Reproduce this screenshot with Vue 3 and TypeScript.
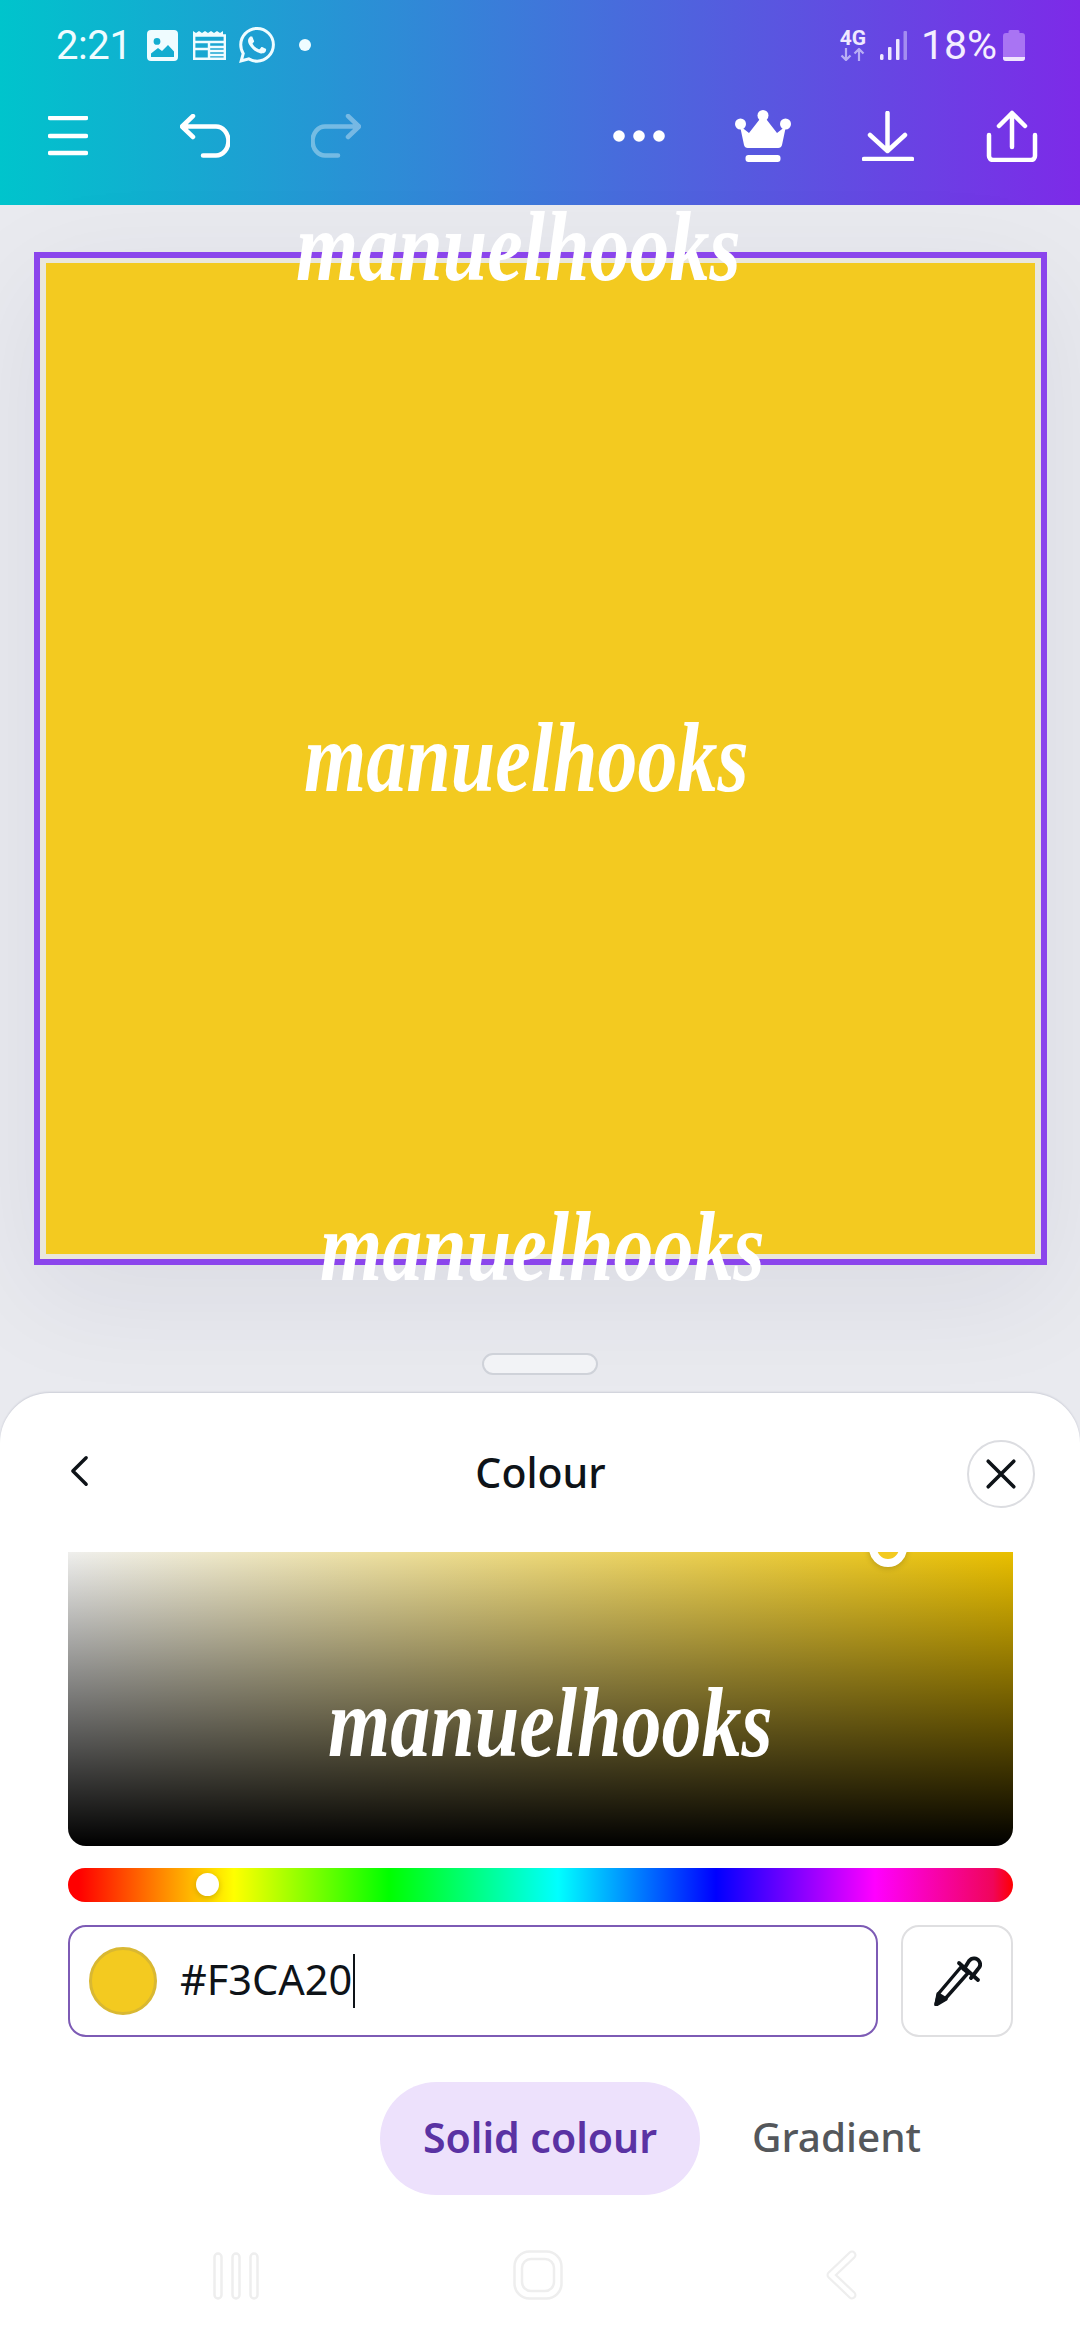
<script setup lang="ts">
const hex = '#F3CA20'
const mark = 'manuelhooks'
const hueStops = 'linear-gradient(90deg, #f00 0, #f00 11px, #ff0 166px, #0f0 321px, #0ff 490px, #00f 648px, #f0f 807px, #f0055a 925px, #f00 945px)'
</script>

<template>
  <div class="screen">
    <header class="top">
      <div class="status">
        <span class="time">2:21</span>
        <svg class="ic-img" viewBox="0 0 31 31">
          <path fill="#effcff" fill-rule="evenodd" d="M4 0h23a4 4 0 0 1 4 4v23a4 4 0 0 1-4 4H4a4 4 0 0 1-4-4V4a4 4 0 0 1 4-4zM10 8a3.4 3.4 0 1 0 0 6.8A3.4 3.4 0 0 0 10 8zM4 23.5V27h23v-5.5l-6-6.5-6 6-4-3z" />
        </svg>
        <svg class="ic-cal" viewBox="0 0 33 29">
          <path fill="none" stroke="#effcff" stroke-width="2.4" d="M1.2 4.5h30.6v23.3H1.2zM1.2 11h30.6M16 11v16.8M16 16h15.8M16 20h15.8M16 24h15.8M1.2 18h14.8" />
          <path fill="#effcff" d="M0 4V0l3 2 3-2 3 2 3-2 3 2 3-2 3 2 3-2 3 2 3-2v5H0z" />
        </svg>
        <svg class="ic-wa" viewBox="0 0 24 24">
          <path fill="#effcff" d="M17.472 14.382c-.297-.149-1.758-.867-2.03-.967-.273-.099-.471-.148-.67.15-.197.297-.767.966-.94 1.164-.173.199-.347.223-.644.075-.297-.15-1.255-.463-2.39-1.475-.883-.788-1.48-1.761-1.653-2.059-.173-.297-.018-.458.13-.606.134-.133.298-.347.446-.52.149-.174.198-.298.298-.497.099-.198.05-.371-.025-.52-.075-.149-.669-1.612-.916-2.207-.242-.579-.487-.5-.669-.51-.173-.008-.371-.01-.57-.01-.198 0-.52.074-.792.372-.272.297-1.04 1.016-1.04 2.479 0 1.462 1.065 2.875 1.213 3.074.149.198 2.096 3.2 5.077 4.487.709.306 1.262.489 1.694.625.712.227 1.36.195 1.871.118.571-.085 1.758-.719 2.006-1.413.248-.694.248-1.289.173-1.413-.074-.124-.272-.198-.57-.347m-5.421 7.403h-.004a9.87 9.87 0 01-5.031-1.378l-.361-.214-3.741.982.998-3.648-.235-.374a9.86 9.86 0 01-1.51-5.26c.001-5.45 4.436-9.884 9.888-9.884 2.64 0 5.122 1.03 6.988 2.898a9.825 9.825 0 012.893 6.994c-.003 5.45-4.437 9.884-9.885 9.884m8.413-18.297A11.815 11.815 0 0012.05 0C5.495 0 .16 5.335.157 11.892c0 2.096.547 4.142 1.588 5.945L.057 24l6.305-1.654a11.882 11.882 0 005.683 1.448h.005c6.554 0 11.89-5.335 11.893-11.893a11.821 11.821 0 00-3.48-8.413z" />
        </svg>
        <i class="dot"></i>
        <span class="spacer"></span>
        <div class="net">
          <b>4G</b>
          <svg viewBox="0 0 26 13">
            <path fill="none" stroke="#b9aef5" stroke-width="2.2" d="M6 0v12M1.5 7.5 6 12l4.5-4.5M19 13V1M14.5 5.5 19 1l4.5 4.5" />
          </svg>
        </div>
        <svg class="ic-sig" viewBox="0 0 27 29">
          <rect x="0" y="23" width="3.5" height="6" rx="1.5" fill="#efe9ff" />
          <rect x="8" y="16" width="3.5" height="13" rx="1" fill="#efe9ff" />
          <rect x="16" y="8" width="3.5" height="21" rx="1" fill="#efe9ff" />
          <rect x="23.5" y="0" width="3.5" height="29" rx="1" fill="#a48df0" />
        </svg>
        <span class="pct">18%</span>
        <svg class="ic-bat" viewBox="0 0 22 31">
          <path fill="#a974f3" d="M7 0h8a1.5 1.5 0 0 1 1.5 1.5V3H19a3 3 0 0 1 3 3v22a3 3 0 0 1-3 3H3a3 3 0 0 1-3-3V6a3 3 0 0 1 3-3h2.500V1.500A1.500 1.500 0 0 1 7 0z" />
          <path fill="#f0e6fd" d="M0 27h22v1a3 3 0 0 1-3 3H3a3 3 0 0 1-3-3z" />
        </svg>
      </div>
      <div class="tools">
        <svg class="t-menu" viewBox="0 0 40 40" stroke="#fff" stroke-width="4.500" stroke-linecap="round">
          <path d="M2 2h36M2 20h36M2 37h36" />
        </svg>
        <svg class="t-undo" viewBox="0 0 50 44" fill="none" stroke="#fff" stroke-width="4.500" stroke-linecap="round" stroke-linejoin="round">
          <path d="M13 2 2 12.500 13 23M3 12.500h33a12 14 0 0 1 0 29H23" />
        </svg>
        <svg class="t-redo" viewBox="0 0 50 44" fill="none" stroke="#fff" stroke-width="4.500" stroke-linecap="round" stroke-linejoin="round">
          <path d="M37 2l11 10.500L37 23M47 12.500H14a12 14 0 0 0 0 29h13" />
        </svg>
        <span class="spacer"></span>
        <svg class="t-more" viewBox="0 0 52 12" fill="#fff">
          <circle cx="6" cy="6" r="5.800" />
          <circle cx="26" cy="6" r="5.800" />
          <circle cx="46" cy="6" r="5.800" />
        </svg>
        <svg class="t-crown" viewBox="0 0 56 52" fill="#fff">
          <circle cx="5.500" cy="14" r="5.500" />
          <circle cx="28" cy="5.500" r="5.500" />
          <circle cx="50.500" cy="14" r="5.500" />
          <path d="M5 16l9 7 14-18 14 18 9-7-4 19a4 4 0 0 1-4 3H13a4 4 0 0 1-4-3z" />
          <rect x="10.500" y="45" width="35" height="7" rx="3" />
        </svg>
        <svg class="t-down" viewBox="0 0 52 50" fill="none" stroke="#fff" stroke-width="4.500" stroke-linecap="round" stroke-linejoin="round">
          <path d="M25.500 2v38M8 24l17.500 16L43 24M2 48h48" />
        </svg>
        <svg class="t-share" viewBox="0 0 52 52" fill="none" stroke="#fff" stroke-width="4.500" stroke-linecap="round" stroke-linejoin="round">
          <path d="M26 37V3M13 16 26 3l13 13M3 25v21a4 4 0 0 0 4 4h38a4 4 0 0 0 4-4V25" />
        </svg>
      </div>
    </header>

    <main class="stage">
      <div class="frame">
        <div class="page"></div>
      </div>
      <div class="handle"></div>
    </main>

    <section class="panel">
      <div class="panel-head">
        <svg class="back" viewBox="0 0 20 32" fill="none" stroke="#0e1318" stroke-width="3.600" stroke-linecap="round" stroke-linejoin="round">
          <path d="M17 2 3 16l14 14" />
        </svg>
        <h2>Colour</h2>
        <button type="button" class="close">
          <svg viewBox="0 0 30 30" fill="none" stroke="#0e1318" stroke-width="3.400" stroke-linecap="round">
            <path d="M3 3l24 24M27 3 3 27" />
          </svg>
        </button>
      </div>

      <div class="picker">
        <span class="picker-thumb"></span>
      </div>

      <div class="hue" :style="{ background: hueStops }">
        <span class="hue-thumb"></span>
      </div>

      <div class="hex-row">
        <div class="hex-input">
          <span class="swatch"></span>
          <span class="hex-text">{{ hex }}</span>
          <i class="caret"></i>
        </div>
        <button type="button" class="dropper">
          <svg viewBox="0 0 50 50" fill="none" stroke="#0e1318" stroke-width="3.400" stroke-linejoin="round" stroke-linecap="round">
            <path d="M29 11 7 37l-3 11 9-5 23-26z" />
            <path d="M27 7l19 17" stroke-width="3.800" />
            <path d="M32 13l5-8c3-4 8-3 10 0 2 3 1 6-1 8l-7 9" stroke-width="3.800" />
            <path fill="#0e1318" d="M6 38l8 5-10 6z" />
          </svg>
        </button>
      </div>

      <div class="tabs">
        <span class="tab active">Solid colour</span>
        <span class="tab">Gradient</span>
      </div>

      <nav class="sysnav">
        <svg class="n-recent" viewBox="0 0 46 48" fill="none" stroke="#eeeeee" stroke-width="2.500">
          <rect x="1.500" y="1.500" width="7" height="45" rx="3.500" />
          <rect x="19.500" y="1.500" width="7" height="45" rx="3.500" />
          <rect x="37.500" y="1.500" width="7" height="45" rx="3.500" />
        </svg>
        <svg class="n-home" viewBox="0 0 50 50" fill="none" stroke="#eeeeee" stroke-width="2.500">
          <rect x="1.500" y="1.500" width="47" height="47" rx="15" />
          <rect x="9" y="9" width="32" height="32" rx="9" />
        </svg>
        <svg class="n-back" viewBox="0 0 32 50" fill="none" stroke="#eeeeee" stroke-width="9" stroke-linecap="round" stroke-linejoin="round">
          <path d="M27 5 6 25l21 20" />
          <path d="M27 5 6 25l21 20" stroke="#fff" stroke-width="4.500" />
        </svg>
      </nav>
    </section>

    <span class="wm wm-top">{{ mark }}</span>
    <span class="wm wm-mid">{{ mark }}</span>
    <span class="wm wm-low">{{ mark }}</span>
    <span class="wm wm-pick">{{ mark }}</span>
  </div>
</template>

<style scoped>
.screen {
  position: relative;
  width: 1080px;
  height: 2340px;
  overflow: hidden;
  display: flex;
  flex-direction: column;
  background: #e9eaef;
  font-family: "Noto Sans", sans-serif;
}

.top {
  height: 205px;
  flex: none;
  display: flex;
  flex-direction: column;
  background: linear-gradient(90deg, #00c4cc 0%, #7d2ae8 100%);
}

.status {
  height: 90px;
  padding: 0 55px 0 56px;
  display: flex;
  align-items: center;
  font-family: Roboto, sans-serif;
  color: #effcff;
}

.time {
  font-size: 40px;
  width: 91px;
  letter-spacing: -0.4px;
}

.ic-img {
  width: 31px;
  height: 31px;
  margin-right: 15px;
}

.ic-cal {
  width: 33px;
  height: 29px;
  margin-right: 13px;
}

.ic-wa {
  width: 36px;
  height: 36px;
}

.dot {
  width: 12px;
  height: 12px;
  margin-left: 24px;
  border-radius: 50%;
  background: #effcff;
}

.spacer {
  flex: 1;
}

.net {
  width: 26px;
  margin-right: 14px;
  display: flex;
  flex-direction: column;
  align-items: center;
}

.net b {
  font-size: 21px;
  line-height: 18px;
  font-weight: 700;
  color: #efe9ff;
}

.net svg {
  width: 26px;
  height: 13px;
  margin-top: 1px;
}

.ic-sig {
  width: 27px;
  height: 29px;
  margin-right: 14px;
}

.pct {
  font-size: 41px;
  color: #f4eeff;
  margin-right: 6px;
}

.ic-bat {
  width: 22px;
  height: 31px;
}

.tools {
  height: 92px;
  padding: 0 42px 0 48px;
  display: flex;
  align-items: center;
}

.t-menu {
  width: 40px;
  height: 40px;
  margin-right: 92px;
}

.t-undo,
.t-redo {
  width: 50px;
  height: 44px;
}

.t-undo {
  margin-right: 81px;
}

.t-redo {
  opacity: 0.36;
}

.t-more {
  width: 52px;
  height: 12px;
  margin-right: 70px;
}

.t-crown {
  width: 56px;
  height: 52px;
  margin-right: 71px;
}

.t-down {
  width: 52px;
  height: 50px;
  margin-right: 72px;
}

.t-share {
  width: 52px;
  height: 52px;
}

.stage {
  flex: 1;
  display: flex;
  flex-direction: column;
  align-items: center;
  padding-top: 47px;
}

.frame {
  width: 1013px;
  height: 1013px;
  box-sizing: border-box;
  padding: 5px 6px;
  border: 6px solid #8b45ec;
  background: #e9e7dc;
  box-shadow: 0 30px 110px rgba(30, 35, 70, 0.07);
}

.page {
  height: 100%;
  background: #f3ca20;
}

.handle {
  width: 116px;
  height: 22px;
  margin-top: 88px;
  box-sizing: border-box;
  border: 2px solid #cfd2d9;
  border-radius: 11px;
  background: #f2f3f6;
}

.panel {
  height: 947px;
  flex: none;
  box-sizing: border-box;
  padding: 0 67px 0 68px;
  border-radius: 50px 50px 0 0;
  background: #fff;
  box-shadow: 0 -1px 2px rgba(30, 35, 70, 0.14);
  display: flex;
  flex-direction: column;
}

.panel-head {
  height: 159px;
  flex: none;
  display: flex;
  align-items: center;
  justify-content: center;
  position: relative;
  padding-bottom: 2px;
  box-sizing: border-box;
}

.panel-head h2 {
  margin: 0;
  font-size: 41px;
  font-weight: 500;
  color: #0e1318;
}

.back {
  position: absolute;
  left: 2px;
  top: 62px;
  width: 19px;
  height: 32px;
}

.close {
  position: absolute;
  right: -22px;
  top: 47px;
  width: 68px;
  height: 68px;
  padding: 0;
  border: 2px solid #dcdde1;
  border-radius: 50%;
  background: #fff;
  display: flex;
  align-items: center;
  justify-content: center;
}

.close svg {
  width: 32px;
  height: 32px;
}

.picker {
  height: 294px;
  flex: none;
  position: relative;
  overflow: hidden;
  border-radius: 0 0 18px 18px;
  background:
    linear-gradient(180deg, rgba(0, 0, 0, 0) 0%, #000 100%),
    linear-gradient(90deg, #efefed 0%, #e9bf00 100%);
}

.picker-thumb {
  position: absolute;
  left: 801px;
  top: -23px;
  width: 38px;
  height: 38px;
  box-sizing: border-box;
  border: 8px solid #fff;
  border-radius: 50%;
  background: #f3ca20;
  box-shadow: 0 1px 6px rgba(0, 0, 0, 0.2);
}

.hue {
  height: 34px;
  flex: none;
  margin-top: 22px;
  position: relative;
  border-radius: 17px;
}

.hue-thumb {
  position: absolute;
  left: 128px;
  top: 5px;
  width: 23px;
  height: 23px;
  border-radius: 50%;
  background: #fff;
  box-shadow: 0 2px 6px rgba(0, 0, 0, 0.18);
}

.hex-row {
  margin-top: 23px;
  height: 112px;
  flex: none;
  display: flex;
  gap: 23px;
}

.hex-input {
  flex: 1;
  box-sizing: border-box;
  border: 2px solid #7d5bb5;
  border-radius: 18px;
  padding-left: 19px;
  display: flex;
  align-items: center;
}

.swatch {
  width: 68px;
  height: 68px;
  box-sizing: border-box;
  border: 3px solid #d9b832;
  border-radius: 50%;
  background: #f3ca20;
  margin-right: 23px;
}

.hex-text {
  font-size: 41.5px;
  line-height: 54px;
  margin-bottom: 4px;
  color: #0e1318;
}

.caret {
  width: 2px;
  height: 54px;
  margin-left: 1px;
  background: #0e1318;
}

.dropper {
  width: 112px;
  padding: 0;
  border: 2px solid #dfdfe1;
  border-radius: 18px;
  background: #fff;
  display: flex;
  align-items: center;
  justify-content: center;
}

.dropper svg {
  width: 50px;
  height: 50px;
}

.tabs {
  margin-top: 45px;
  height: 113px;
  flex: none;
  display: flex;
  align-items: center;
  padding-left: 312px;
}

.tab {
  height: 113px;
  box-sizing: border-box;
  padding-bottom: 4px;
  display: flex;
  align-items: center;
  font-size: 40.5px;
  font-weight: 500;
  color: #54575b;
}

.tab.active {
  width: 320px;
  justify-content: center;
  margin-right: 52px;
  border-radius: 57px;
  background: #ede1fc;
  color: #5a32a3;
  font-size: 41px;
  font-weight: 600;
}

.sysnav {
  position: relative;
  flex: 1;
}

.sysnav svg {
  position: absolute;
}

.n-recent {
  left: 145px;
  top: 57px;
  width: 46px;
  height: 48px;
}

.n-home {
  left: 445px;
  top: 55px;
  width: 50px;
  height: 50px;
}

.n-back {
  left: 757px;
  top: 55px;
  width: 32px;
  height: 50px;
}

.wm {
  position: absolute;
  font-family: "Liberation Serif", serif;
  font-style: italic;
  font-weight: 700;
  font-size: 100px;
  line-height: 100px;
  color: #fff;
  white-space: nowrap;
  transform: scaleX(0.8);
  transform-origin: left top;
}

.wm-top {
  left: 296px;
  top: 197px;
}

.wm-mid {
  left: 304px;
  top: 708px;
}

.wm-low {
  left: 320px;
  top: 1197px;
}

.wm-pick {
  left: 328px;
  top: 1673px;
}
</style>
